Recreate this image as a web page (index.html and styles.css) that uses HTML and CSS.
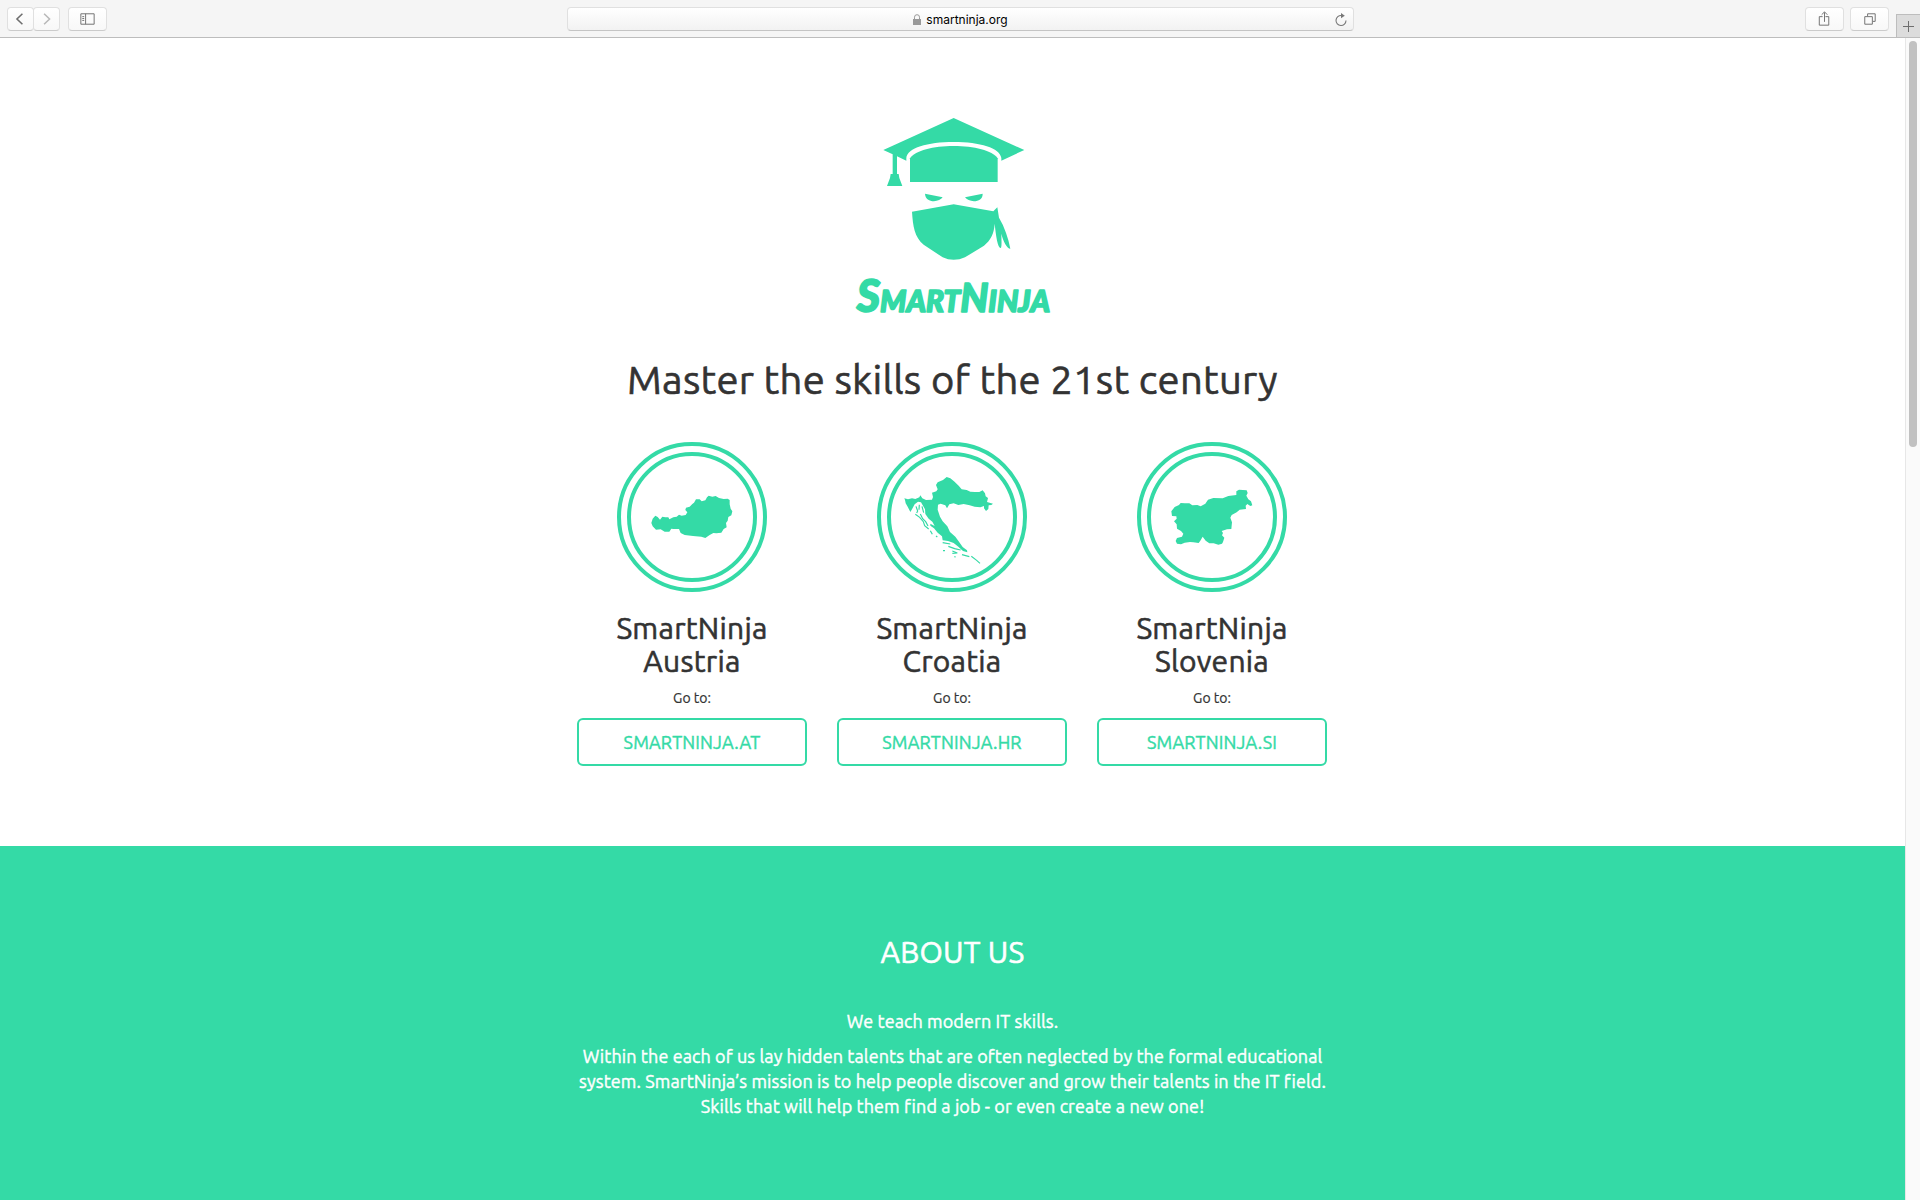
FILE: index.html
```html
<!DOCTYPE html>
<html lang="en">
<head>
<meta charset="utf-8">
<title>SmartNinja</title>
<link rel="stylesheet" href="styles.css">
</head>
<body>
<header class="toolbar">
  <div class="tools tools-left">
    <div class="nav-pair">
      <button class="tool nav" aria-label="Back"><svg width="26" height="24" viewBox="0 0 26 24"><path d="M15 6.500 9.300 12l5.700 5.500" fill="none" stroke="#6e6e6e" stroke-width="1.600"/></svg></button>
      <button class="tool nav" aria-label="Forward"><svg width="26" height="24" viewBox="0 0 26 24"><path d="M10.500 6.500 16.200 12l-5.700 5.500" fill="none" stroke="#b8b8b8" stroke-width="1.600"/></svg></button>
    </div>
    <button class="tool wide" aria-label="Sidebar"><svg width="39" height="24" viewBox="0 0 39 24"><path d="M12.500 6.500h14v11h-14zM17.500 6.500v11M14 9.500h2M14 11.500h2M14 13.500h2" fill="none" stroke="#6e6e6e"/></svg></button>
  </div>
  <div class="address">
    <svg class="lock" width="8" height="11" viewBox="0 0 8 11"><path d="M0 5h8v6H0z" fill="#999"/><path d="M1.500 5V3.200a2.500 2.500 0 0 1 5 0V5" fill="none" stroke="#999"/></svg>
    <span class="host">smartninja.org</span>
    <svg class="reload" width="14" height="14" viewBox="0 0 14 14"><path d="M7.500 2.500A5 5 0 1 0 12 7.500" fill="none" stroke="#777" stroke-width="1.100"/><path d="M7 0l3.800 2.700L7 5.300z" fill="#777"/></svg>
  </div>
  <div class="tools tools-right">
    <button class="tool wide" aria-label="Share"><svg width="39" height="24" viewBox="0 0 39 24"><path d="M17.500 9.500h-3.500v9h10v-9h-3.500M19.500 15V5M16.500 7.500l3-3 3 3" fill="none" stroke="#6e6e6e"/></svg></button>
    <button class="tool wide" aria-label="Tabs"><svg width="39" height="24" viewBox="0 0 39 24"><path d="M14.500 9.500h8v8h-8zM17.500 9V6.500h8v8H23" fill="none" stroke="#6e6e6e"/></svg></button>
  </div>
  <button class="new-tab" aria-label="New tab"><svg width="23" height="23" viewBox="0 0 23 23"><path d="M6 11.500h11M11.500 6v11" stroke="#6e6e6e"/></svg></button>
</header>
<div class="viewport">
  <div class="page">
    <section class="intro">
      <svg class="logo" viewBox="0 0 675 690" role="img" aria-label="SmartNinja">
        <g fill="#34daa6">
          <path d="M341 54 553 150 484 182V174C480 144 420 126 341 126S202 144 199 174V182L171 169V222H176L178 234 187 258H141L150 234 152 222H158V163L130 150Z"/>
          <path d="M210 246V175C226 151 280 138 341 138S457 151 473 175V246Z"/>
          <path d="M255 281 308 292C298 308 256 310 255 281ZM428 281 375 292C385 308 429 310 428 281Z"/>
          <path d="M216 335 341 313 460 334 472 322 477 353C494 381 505 415 511 446 501 446 490 425 484 401 484 417 486 434 483 444 473 446 468 408 464 371 462 402 452 420 432 437L375 472C353 482 329 482 308 472L251 434C223 410 219 379 216 335Z"/>
        </g>
        <text class="wordmark" x="50" y="636" textLength="580" lengthAdjust="spacingAndGlyphs"><tspan class="cap">S</tspan>MART<tspan class="cap n">N</tspan>INJA</text>
      </svg>
      <h1>Master the skills of the 21st century</h1>
      <div class="countries">
        <article class="country">
          <svg class="badge" viewBox="21 36 450 450"><g fill="none" stroke="#34daa6" stroke-width="12"><circle cx="246" cy="261" r="219"/><circle cx="246" cy="261" r="189"/></g>
            <path fill="#34daa6" d="M124 279 128 266 136 257 143 261 150 269 157 260 166 262 175 262 178 268 190 262 200 260 207 254 215 257 227 255 232 247 226 240 228 233 239 230 247 222 252 218 258 208 269 208 275 214 286 211 291 202 296 197 307 200 317 198 327 204 341 207 353 206 359 210 359 223 362 236 367 244 364 256 355 261 353 272 348 279 350 292 341 297 334 308 319 310 310 309 299 315 286 324 274 320 249 318 224 315 212 309 207 297 190 297 184 296 178 305 164 305 152 298 138 299 128 289Z"/></svg>
          <h2>SmartNinja<br>Austria</h2>
          <p>Go to:</p>
          <a class="link">SMARTNINJA.AT</a>
        </article>
        <article class="country">
          <svg class="badge" viewBox="21 36 450 450"><g fill="none" stroke="#34daa6" stroke-width="12"><circle cx="246" cy="261" r="219"/><circle cx="246" cy="261" r="189"/></g>
            <path fill="#34daa6" d="M103 205 114 208 126 205 136 207 148 202 151 196 157 205 168 210 186 209 189 201 186 188 199 184 203 178 198 165 203 157 219 150 230 141 241 145 252 154 266 167 275 178 290 180 301 185 315 186 328 186 338 181 345 190 347 199 354 204 351 216 369 221 364 225 356 226 355 237 348 243 342 235 342 228 331 232 314 230 299 226 281 222 265 225 251 220 238 223 231 235 226 226 212 221 204 224 203 239 210 260 218 274 232 289 240 306 256 320 268 337 278 351 291 361 292 367 279 363 265 350 251 339 234 333 218 331 216 319 203 308 192 295 181 287 181 281 194 288 187 275 176 266 166 252 165 238 153 217 144 215 134 223 126 238 121 246 113 230 107 220 105 210Z"/>
            <path d="M138 229 143 243 140 249M148 224 147 239M156 229 161 248M136 253 149 262 160 275 164 287 176 297M151 252 158 266 167 275 174 288M181 302 187 313M218 338 241 342M235 349 254 356 272 360M247 363 262 369 247 370M276 374 298 380M304 379 320 391 330 400M219 362 225 362M253 380 257 381M198 318 202 321" fill="none" stroke="#34daa6" stroke-width="3.500"/></svg>
          <h2>SmartNinja<br>Croatia</h2>
          <p>Go to:</p>
          <a class="link">SMARTNINJA.HR</a>
        </article>
        <article class="country">
          <svg class="badge" viewBox="21 36 450 450"><g fill="none" stroke="#34daa6" stroke-width="12"><circle cx="246" cy="261" r="219"/><circle cx="246" cy="261" r="189"/></g>
            <path fill="#34daa6" d="M124 244 134 231 147 225 152 219 165 220 178 220 187 226 202 225 212 229 226 221 234 209 250 204 278 205 295 198 319 195 319 184 327 179 350 181 353 189 349 197 355 208 363 214 367 226 361 228 352 222 347 227 348 237 329 239 320 247 305 255 301 263 306 277 304 297 291 298 275 303 279 309 276 316 283 323 279 336 276 341 265 344 251 340 238 340 227 332 218 320 211 332 206 339 190 337 180 336 164 338 153 343 141 341 137 333 141 324 156 320 160 311 153 303 141 296 140 283 132 274 140 266 139 259 126 258Z"/></svg>
          <h2>SmartNinja<br>Slovenia</h2>
          <p>Go to:</p>
          <a class="link">SMARTNINJA.SI</a>
        </article>
      </div>
    </section>
    <section class="about">
      <h2>ABOUT US</h2>
      <p class="lead">We teach modern IT skills.</p>
      <p>Within the each of us lay hidden talents that are often neglected by the formal educational<br>system. SmartNinja’s mission is to help people discover and grow their talents in the IT field.<br>Skills that will help them find a job - or even create a new one!</p>
    </section>
  </div>
  <div class="scrollbar"><div class="thumb"></div></div>
</div>
</body>
</html>
```
FILE: styles.css
```css
* { box-sizing: border-box; }

body {
  margin: 0;
  height: 1200px;
  display: flex;
  flex-direction: column;
  overflow: hidden;
  background: #fff;
  color: #333;
  font-family: Ubuntu, "Noto Sans", sans-serif;
}

button { font: inherit; padding: 0; }
svg { display: block; }

.toolbar {
  flex: none;
  height: 38px;
  display: grid;
  grid-template-columns: 567px 787px 1fr 24px;
  background: #f5f5f5;
  border-bottom: 1px solid #bdbdbd;
}

.tools { display: flex; gap: 8px; padding-top: 7px; }
.tools-left { padding-left: 7px; }
.tools-right { justify-content: flex-end; gap: 6px; padding-right: 7px; }
.nav-pair { display: flex; }

.tool {
  display: flex;
  justify-content: center;
  align-items: center;
  height: 24px;
  background: linear-gradient(#fff, #f8f8f8);
  border: 1px solid #e0e0e0;
  border-bottom-color: #cbcbcb;
  border-radius: 4px;
}
.nav { width: 27px; }
.nav + .nav { margin-left: -1px; }
.wide { width: 39px; }

.address {
  display: grid;
  grid-template-columns: 1fr auto auto 1fr;
  align-items: center;
  margin-top: 7px;
  height: 24px;
  padding: 0 5px;
  background: linear-gradient(#fff, #f2f2f2);
  border: 1px solid #e0e0e0;
  border-bottom-color: #c4c4c4;
  border-radius: 4px;
}
.lock { grid-column: 2; margin-right: 5px; }
.host {
  padding-top: 1px;
  font: 12px/22px Inter, sans-serif;
  color: #000;
}
.reload { justify-self: end; }

.new-tab {
  align-self: end;
  height: 23px;
  background: #dcdcdc;
  border: solid #bdbdbd;
  border-width: 1px 0 0 1px;
}

.viewport { flex: 1; display: flex; min-height: 0; }
.page { flex: 1; text-align: center; }

.scrollbar {
  width: 15px;
  padding: 3px 0 0 3px;
  background: #fafafa;
  border-left: 1px solid #e7e7e7;
}
.thumb {
  width: 8px;
  height: 406px;
  border-radius: 4px;
  background: #c1c1c1;
}

.intro { height: 808px; padding-top: 62px; }
.logo { width: 225px; height: 230px; margin: 0 auto; }
.wordmark {
  font: italic 900 90px Lato, sans-serif;
  fill: #34daa6;
  stroke: #34daa6;
  stroke-width: 5px;
  stroke-linejoin: round;
}
.wordmark .cap { font-size: 136px; }
.wordmark .n { font-size: 118px; }

h1, h2, p { margin: 0; font-weight: 400; }
h1, h2 { -webkit-text-stroke: 0.6px; }
h1 {
  margin-top: 28px;
  font-size: 40px;
  line-height: 44px;
  letter-spacing: 0.25px;
}
h2 { font-size: 30px; line-height: 33px; letter-spacing: 0.25px; }

.countries {
  display: grid;
  grid-template-columns: repeat(3, 230px);
  gap: 30px;
  justify-content: center;
  margin-top: 40px;
  padding-right: 1px;
}
.badge { width: 150px; height: 150px; margin: 0 auto; }
.country h2 { margin-top: 20px; }
.country p {
  margin-top: 10px;
  font-size: 14px;
  line-height: 20px;
  -webkit-text-stroke: 0.2px;
}
.link {
  display: block;
  margin-top: 10px;
  height: 48px;
  border: 2px solid #34daa6;
  border-radius: 6px;
  color: #34daa6;
  font-size: 18px;
  line-height: 45px;
  letter-spacing: 0.15px;
  -webkit-text-stroke: 0.4px;
}

.about {
  height: 354px;
  padding-top: 90px;
  background: #34daa6;
  color: #fff;
}
.about p {
  font-size: 18px;
  line-height: 25px;
  letter-spacing: 0.1px;
  -webkit-text-stroke: 0.4px;
}
.about .lead { margin: 40px 0 10px; }
```
